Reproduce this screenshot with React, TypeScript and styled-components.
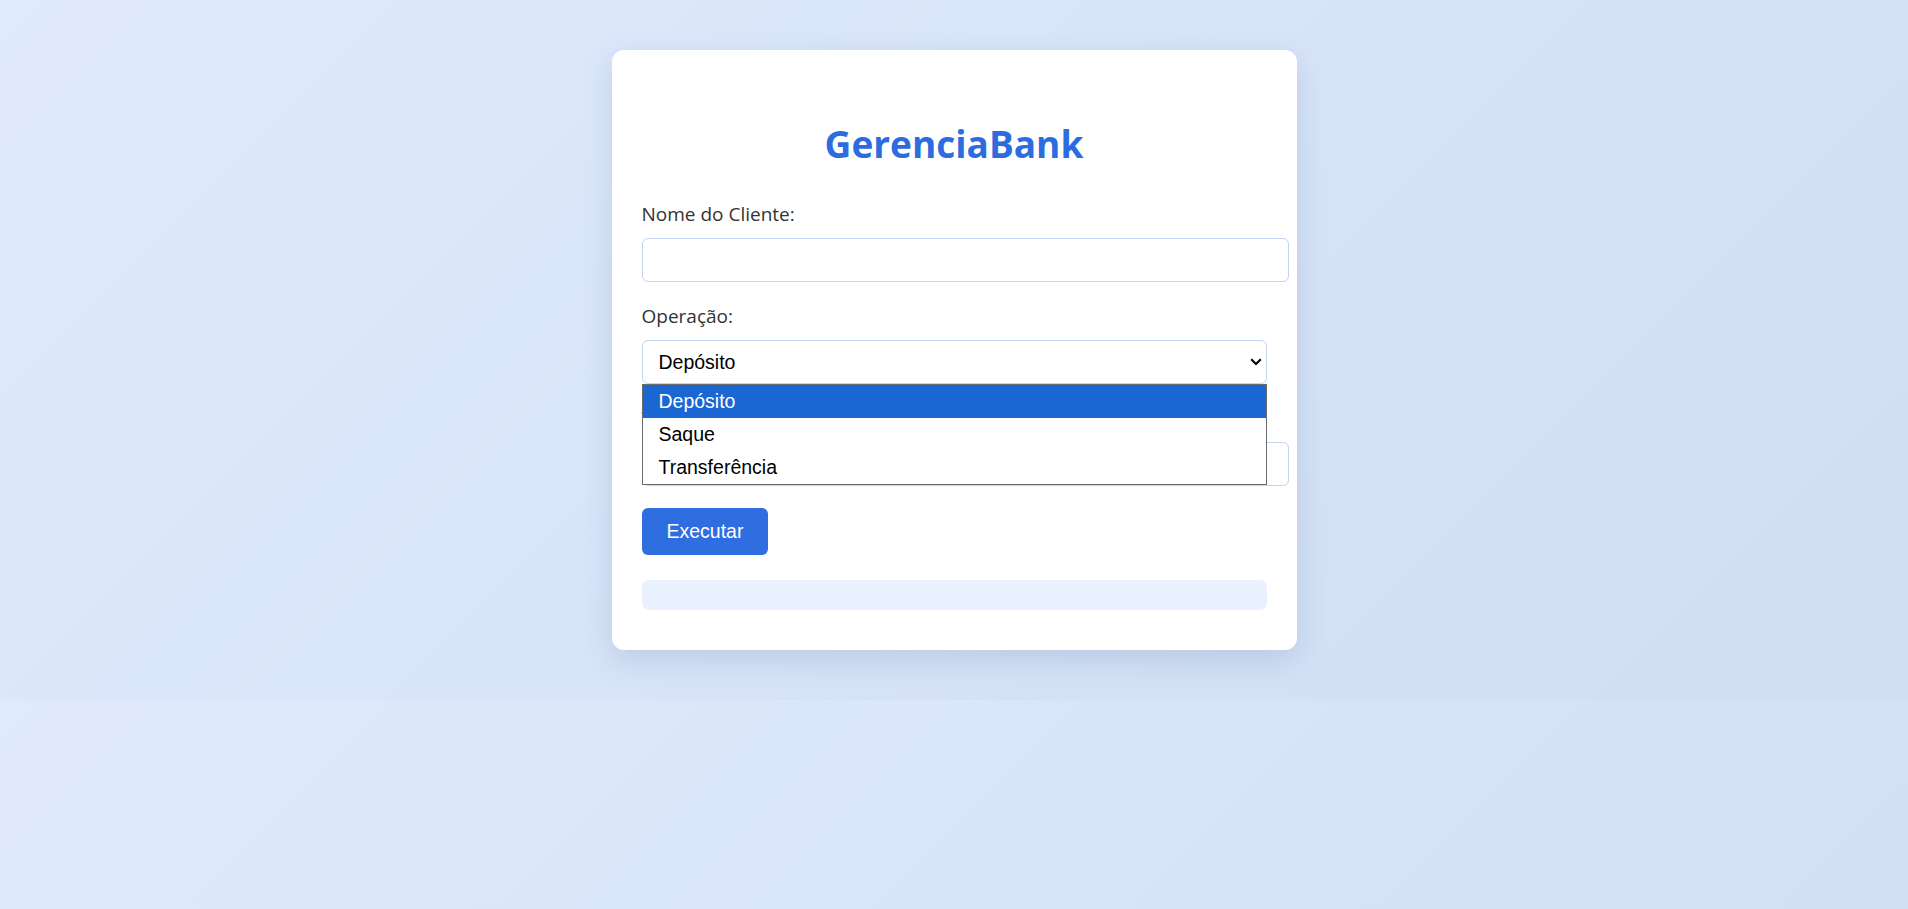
import React from "react";
import styled, { createGlobalStyle } from "styled-components";

const GlobalStyle = createGlobalStyle`
  html, body {
    margin: 0;
  }
  body {
    padding: 50px 0;
    background: linear-gradient(135deg, #e0eafc 0%, #cfdef3 100%);
    font-family: "Open Sans", "Noto Sans", sans-serif;
  }
`;

const Card = styled.main`
  width: 625px;
  margin: 0 auto;
  padding: 30px 30px 40px;
  background: #ffffff;
  border-radius: 12px;
  box-shadow: 0 10px 30px rgba(40, 80, 150, 0.16);
`;

const Title = styled.h1`
  margin: 40px 0 34px;
  font-family: "Open Sans", "Noto Sans", sans-serif;
  font-weight: 700;
  font-size: 37px;
  line-height: 48px;
  color: #2d6cdf;
  text-align: center;
`;

const Field = styled.div`
  display: flex;
  flex-direction: column;
  align-items: flex-start;
  margin-bottom: 22px;
`;

const Label = styled.label`
  font-size: 19px;
  line-height: 24px;
  color: #333333;
  margin-bottom: 12px;
`;

const TextInput = styled.input`
  box-sizing: content-box;
  width: 100%;
  height: 22px;
  padding: 10px;
  border: 1px solid #c2d4ef;
  border-radius: 6px;
  background: #ffffff;
  font-family: "Liberation Sans", Arial, sans-serif;
  font-size: 19.5px;
  outline: none;
`;

const SelectWrap = styled.div`
  position: relative;
  width: 100%;
`;

const Select = styled.select`
  box-sizing: border-box;
  width: 100%;
  height: 44px;
  padding: 0 40px 0 16px;
  appearance: none;
  -webkit-appearance: none;
  border: 1px solid #c2d4ef;
  border-radius: 6px;
  background: #ffffff;
  color: #000000;
  font-family: "Liberation Sans", Arial, sans-serif;
  font-size: 19.5px;
  outline: none;
`;

const Chevron = styled.svg`
  position: absolute;
  right: 5px;
  top: 50%;
  transform: translateY(-50%);
  pointer-events: none;
`;

const Dropdown = styled.ul`
  position: absolute;
  top: 100%;
  left: 0;
  right: 0;
  margin: 0;
  padding: 0;
  list-style: none;
  background: #ffffff;
  border: 1px solid #6b6b6b;
  z-index: 5;
`;

const Option = styled.li<{ $active?: boolean }>`
  height: 33px;
  display: flex;
  align-items: center;
  padding-left: 16px;
  font-family: "Liberation Sans", Arial, sans-serif;
  font-size: 19.5px;
  color: ${(p) => (p.$active ? "#ffffff" : "#000000")};
  background: ${(p) => (p.$active ? "#1a67d3" : "#ffffff")};
`;

const Button = styled.button`
  height: 47px;
  padding: 0 25px;
  border: none;
  border-radius: 6px;
  background: #2f6ee0;
  color: #ffffff;
  font-family: "Liberation Sans", Arial, sans-serif;
  font-size: 19.5px;
  cursor: pointer;
`;

const Result = styled.div`
  margin-top: 25px;
  padding: 15px;
  background: #e8f1fd;
  border-radius: 7px;
`;

const options = ["Depósito", "Saque", "Transferência"];

export default function App() {
  return (
    <>
      <GlobalStyle />
      <Card>
        <Title>GerenciaBank</Title>
        <Field>
          <Label htmlFor="nome">Nome do Cliente:</Label>
          <TextInput id="nome" type="text" />
        </Field>
        <Field>
          <Label htmlFor="op">Operação:</Label>
          <SelectWrap>
            <Select id="op" defaultValue="Depósito">
              {options.map((o) => (
                <option key={o} value={o}>
                  {o}
                </option>
              ))}
            </Select>
            <Chevron width="12" height="8" viewBox="0 0 12 8">
              <path d="M1.2 1.2 L6 6 L10.8 1.2" fill="none" stroke="#000" strokeWidth="2" />
            </Chevron>
            <Dropdown>
              {options.map((o, i) => (
                <Option key={o} $active={i === 0}>
                  {o}
                </Option>
              ))}
            </Dropdown>
          </SelectWrap>
        </Field>
        <Field>
          <Label htmlFor="valor">Valor:</Label>
          <TextInput id="valor" type="number" />
        </Field>
        <Button>Executar</Button>
        <Result />
      </Card>
    </>
  );
}
